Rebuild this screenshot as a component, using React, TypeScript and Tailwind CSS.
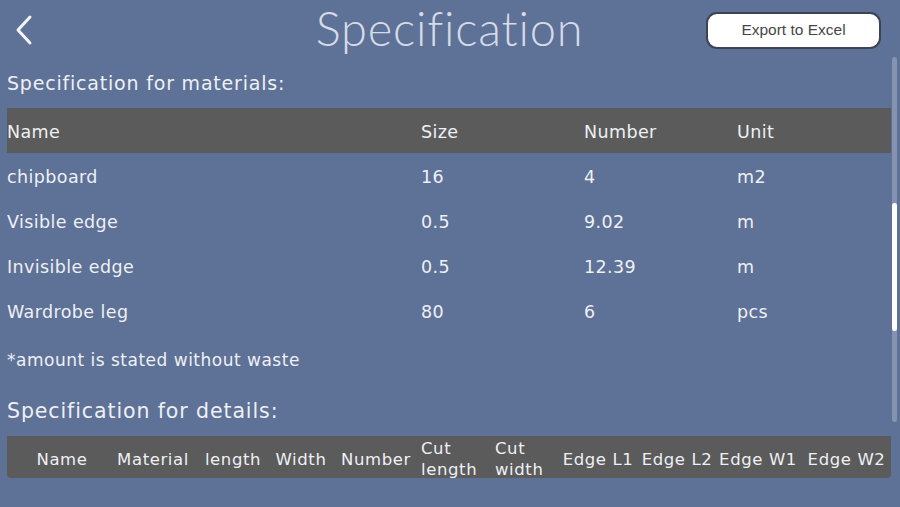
import React from 'react';

const materials = [
  { name: 'chipboard', size: '16', number: '4', unit: 'm2' },
  { name: 'Visible edge', size: '0.5', number: '9.02', unit: 'm' },
  { name: 'Invisible edge', size: '0.5', number: '12.39', unit: 'm' },
  { name: 'Wardrobe leg', size: '80', number: '6', unit: 'pcs' },
];

const App: React.FC = () => {
  return (
    <div
      className="relative w-[900px] h-[507px] overflow-hidden bg-[#5e7197] text-[#eef0f4]"
      style={{ fontFamily: '"DejaVu Sans", sans-serif' }}
    >
      {/* top bar */}
      <div className="flex items-center h-[60px] pl-[13px] pr-[19px]">
        <svg width="22" height="32" viewBox="0 0 22 32" className="shrink-0">
          <path d="M17 3 L5 16 L17 29" fill="none" stroke="#f4f5f8" strokeWidth="3" strokeLinecap="round" strokeLinejoin="round" />
        </svg>
        <div
          className="flex-1 text-center text-[47px] font-light text-[#d5dbe7] tracking-[0.8px] pl-[158px] leading-none -mt-[4px]"
          style={{ fontFamily: 'Lato, sans-serif' }}
        >
          Specification
        </div>
        <button
          className="w-[175px] h-[37px] rounded-[11px] bg-white border-2 border-[#3c4354] text-[#474747] text-[15.5px]"
          style={{ fontFamily: '"Liberation Sans", Arial, sans-serif' }}
        >
          Export to Excel
        </button>
      </div>

      <div className="pl-[7px] pr-[9px]">
        <div className="h-[48px] flex items-center text-[19px] tracking-[0.8px] pb-[1px]">Specification for materials:</div>

        <div className="text-[17.5px] tracking-[0.4px]">
          <div className="grid grid-cols-[414px_163px_153px_1fr] h-[45px] items-center bg-[#5b5b5b] pt-[3px]">
            <span>Name</span>
            <span>Size</span>
            <span>Number</span>
            <span>Unit</span>
          </div>
          {materials.map((m) => (
            <div key={m.name} className="grid grid-cols-[414px_163px_153px_1fr] h-[45px] items-center pt-[3px]">
              <span>{m.name}</span>
              <span>{m.size}</span>
              <span>{m.number}</span>
              <span>{m.unit}</span>
            </div>
          ))}
        </div>

        <div className="h-[50px] flex items-center text-[17px] tracking-[0.5px] pt-[5px]">*amount is stated without waste</div>
        <div className="h-[52px] flex items-center text-[20.5px] tracking-[0.9px] pt-[4px]">Specification for details:</div>

        <div className="mt-[1px] grid grid-cols-[103px_86px_74px_62px_88px_70px_66px_84px_74px_88px_1fr] h-[42px] items-center bg-[#5b5b5b] rounded-b-[4px] text-[16.5px] tracking-[0.6px] leading-[21px] whitespace-nowrap pt-[2px]">
          <span className="text-center pl-[7px]">Name</span>
          <span className="text-center">Material</span>
          <span className="text-center">length</span>
          <span className="text-center">Width</span>
          <span className="text-center">Number</span>
          <span className="pl-[1px]">Cut<br />length</span>
          <span className="pl-[5px]">Cut<br />width</span>
          <span className="text-center">Edge L1</span>
          <span className="text-center">Edge L2</span>
          <span className="text-center">Edge W1</span>
          <span className="text-center">Edge W2</span>
        </div>
      </div>

      {/* scrollbar */}
      <div className="absolute left-[892px] top-[57px] w-[5px] h-[365px] rounded-full bg-[#8593b0]">
        <div className="mt-[146px] h-[128px] w-[5px] rounded-full bg-white" />
      </div>
    </div>
  );
};

export default App;
